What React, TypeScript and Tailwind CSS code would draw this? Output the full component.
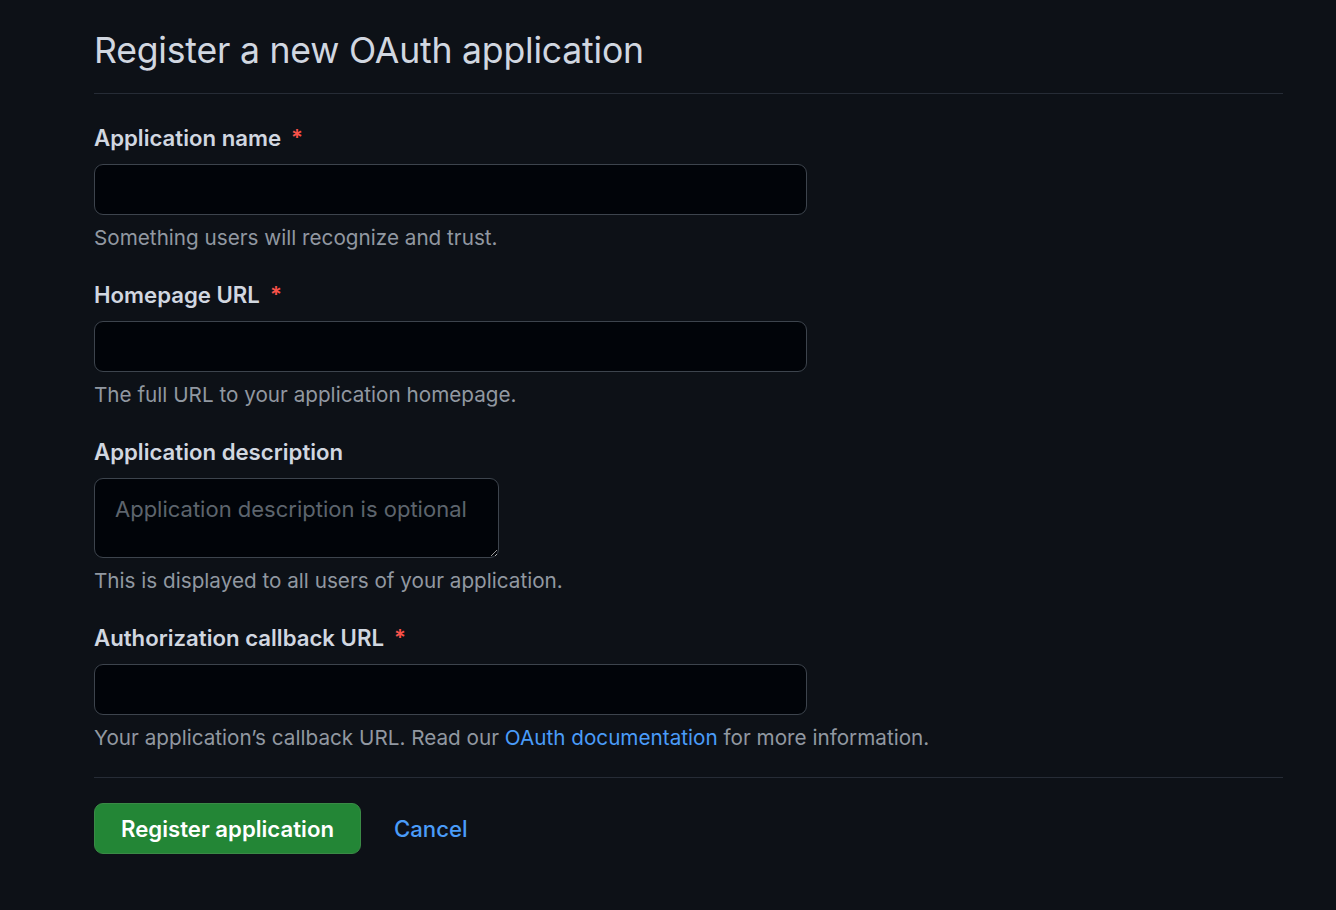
import React from "react";

const font = { fontFamily: "Inter, 'Noto Sans', 'Liberation Sans', sans-serif" };

function Label({ text, required }: { text: string; required?: boolean }) {
  return (
    <div className="h-[30px] leading-[30px] text-[22.2px] font-semibold text-[#d1d7e0]">
      {text}
      {required && <span className="ml-[10px] text-[#f85149]">*</span>}
    </div>
  );
}

function Hint({ children }: { children: React.ReactNode }) {
  return <div className="h-[30px] leading-[30px] text-[20.7px] text-[#9198a1]">{children}</div>;
}

function Field({ label, hint }: { label: string; hint: React.ReactNode }) {
  return (
    <div className="flex flex-col">
      <Label text={label} required />
      <input
        type="text"
        className="mt-[11px] h-[51px] w-[713px] rounded-[9px] border border-[#3d444d] bg-[#010409] px-[18px] text-[21px] text-[#d1d7e0] outline-none"
      />
      <div className="mt-[8px]">
        <Hint>{hint}</Hint>
      </div>
    </div>
  );
}

export default function App() {
  return (
    <div className="min-h-[910px] w-full bg-[#0d1117] pl-[94px] pr-[53px]" style={font}>
      <div className="border-b border-[#262c36] pt-[28px] pb-[20px]">
        <h1 className="h-[45px] leading-[45px] text-[35.6px] font-normal text-[#d1d7e0] tracking-[-0.2px]">
          Register a new OAuth application
        </h1>
      </div>
      <div className="flex flex-col gap-[27px] pt-[29px]">
        <Field label="Application name" hint="Something users will recognize and trust." />
        <Field label="Homepage URL" hint="The full URL to your application homepage." />
        <div className="flex flex-col">
          <Label text="Application description" />
          <textarea
            placeholder="Application description is optional"
            className="mt-[11px] h-[80px] w-[405px] rounded-[9px] border border-[#3d444d] bg-[#010409] px-[20px] pt-[15px] text-[22px] leading-[30px] text-[#d1d7e0] placeholder:text-[#5d646d] outline-none"
          />
          <div className="mt-[8px]">
            <Hint>This is displayed to all users of your application.</Hint>
          </div>
        </div>
        <Field
          label="Authorization callback URL"
          hint={
            <>
              Your application’s callback URL. Read our{" "}
              <span className="text-[#4a9cf9]">OAuth documentation</span> for more information.
            </>
          }
        />
      </div>
      <div className="mt-[24px] border-t border-[#262c36] pt-[25px] flex items-center">
        <button className="h-[51px] rounded-[9px] border border-[#3a8a46] bg-[#238636] px-[26px] text-[22.2px] font-semibold text-white">
          Register application
        </button>
        <span className="ml-[33px] text-[22.2px] font-medium text-[#4a9cf9]">Cancel</span>
      </div>
    </div>
  );
}
